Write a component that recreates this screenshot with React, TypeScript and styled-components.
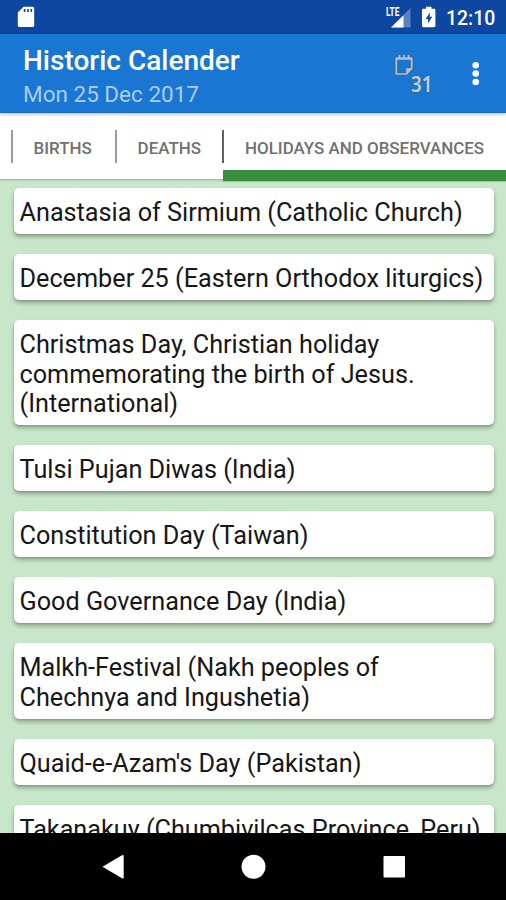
import React from 'react';
import styled, { createGlobalStyle } from 'styled-components';

const GlobalStyle = createGlobalStyle`
  * { box-sizing: border-box; }
  body { margin: 0; font-family: Roboto, "Noto Sans", sans-serif; }
`;

const Screen = styled.div`
  width: 506px;
  height: 900px;
  display: flex;
  flex-direction: column;
  overflow: hidden;
  background: #c8e6c9;
`;

const StatusBar = styled.header`
  flex: none;
  height: 34px;
  display: flex;
  align-items: center;
  padding: 0 11px 0 17px;
  background: #0d47a1;
  color: #fff;
`;

const StatusIcons = styled.div`
  margin-left: auto;
  display: flex;
  align-items: center;
`;

const Clock = styled.span`
  width: 49px;
  margin-left: 9px;
  font-size: 19.4px;
  font-weight: 500;
  line-height: 34px;
  white-space: nowrap;
  padding-top: 3px;
`;

const AppBar = styled.div`
  flex: none;
  height: 79px;
  display: flex;
  padding-left: 23px;
  background: #1976d2;
  border-bottom: 1px solid #126bc8;
  color: #fff;
  z-index: 3;
  box-shadow: 0 1px 4px rgba(0, 0, 0, 0.3);
`;

const Titles = styled.div`
  flex: 1;
  padding-top: 10px;
  white-space: nowrap;
`;

const Title = styled.h1`
  margin: 0;
  font-size: 28px;
  font-weight: 500;
  line-height: 33px;
`;

const Subtitle = styled.div`
  font-size: 22.5px;
  line-height: 35px;
  color: #a9cdf2;
`;

const Actions = styled.div`
  display: flex;
  width: 113px;
`;

const Tabs = styled.nav`
  flex: none;
  height: 66px;
  display: flex;
  padding-left: 11px;
  background: #fff;
  z-index: 2;
  box-shadow: 0 1px 2px rgba(0, 0, 0, 0.25);
`;

const Tab = styled.div<{ $width: number; $active?: boolean }>`
  position: relative;
  flex: none;
  width: ${p => p.$width}px;
  padding: 18px 0 0 ${p => (p.$active ? 22 : 22.6)}px;
  font-size: 16.95px;
  font-weight: 500;
  line-height: 35px;
  color: #707070;
  white-space: nowrap;

  &::before {
    content: '';
    position: absolute;
    left: ${p => (p.$active ? -1 : 0)}px;
    top: 17px;
    width: ${p => (p.$active ? 1.5 : 2)}px;
    height: 33px;
    background: ${p => (p.$active ? '#606060' : '#9b9b9b')};
  }

  &::after {
    content: '';
    display: ${p => (p.$active ? 'block' : 'none')};
    position: absolute;
    left: 0;
    right: 0;
    top: 57px;
    height: 11px;
    background: #388e3c;
    box-shadow: 0 1px 1px rgba(0, 0, 0, 0.15);
  }
`;

const List = styled.main`
  flex: 1;
  min-height: 0;
  overflow: hidden;
  display: flex;
  flex-direction: column;
  gap: 20.25px;
  padding: 9px 12px 0 13.5px;
`;

const Card = styled.article`
  flex: none;
  padding: 10px 6px 6.1px;
  border-radius: 5px;
  background: #fff;
  color: #171717;
  font-size: 25.22px;
  line-height: 29.65px;
  white-space: pre-line;
  box-shadow: 0 3px 4px rgba(0, 0, 0, 0.28), 0 1px 2px rgba(0, 0, 0, 0.12);
`;

const NavBar = styled.footer`
  flex: none;
  height: 67px;
  background: #000;
  z-index: 2;
`;

const events = [
  'Anastasia of Sirmium (Catholic Church)',
  'December 25 (Eastern Orthodox liturgics)',
  'Christmas Day, Christian holiday\ncommemorating the birth of Jesus.\n(International)',
  'Tulsi Pujan Diwas (India)',
  'Constitution Day (Taiwan)',
  'Good Governance Day (India)',
  'Malkh-Festival (Nakh peoples of\nChechnya and Ingushetia)',
  "Quaid-e-Azam's Day (Pakistan)",
  'Takanakuy (Chumbivilcas Province, Peru)',
];

const SdCardIcon = () => (
  <svg width="18" height="22" viewBox="0 0 18 22">
    <path d="M6.5.8H15.6a1.6 1.6 0 0 1 1.6 1.6v17a1.6 1.6 0 0 1-1.6 1.6H2.4A1.6 1.6 0 0 1 .8 19.4V6.5Z" fill="#fff" />
    <path d="M7.6 3v3M11 3v3M14.3 3v3" stroke="#0d47a1" strokeWidth="1.6" />
  </svg>
);

const SignalIcon = () => (
  <svg width="36" height="24" viewBox="0 0 36 24">
    <path d="M25.500 3v19.500H6Z" fill="#5b82c0" />
    <path d="M18.500 10.300V22.500H6Z" fill="#fff" />
    <text x="1" y="11" fontSize="12" fontWeight="700" fill="#fff" stroke="#0d47a1" strokeWidth=".8" paintOrder="stroke" textLength="13.500" lengthAdjust="spacingAndGlyphs">LTE</text>
  </svg>
);

const BatteryIcon = () => (
  <svg width="16" height="22" viewBox="0 0 16 22">
    <path d="M5 .8h5.500v2H13a1.400 1.400 0 0 1 1.400 1.400v15.600a1.400 1.400 0 0 1-1.400 1.400H2.400A1.400 1.400 0 0 1 1 19.800V4.200a1.400 1.400 0 0 1 1.400-1.400H5Z" fill="#fff" />
    <path d="M9 6.500 4.600 13h2.500v4.500l4.100-6.800H8.700Z" fill="#0d47a1" />
  </svg>
);

const ActionIcons = () => (
  <svg width="113" height="78" viewBox="0 0 113 78">
    <g fill="none" strokeLinejoin="round">
      <path d="M3.300 24H18.700V34.500L13.500 40H3.300Z" stroke="#45647f" strokeWidth="3.800" />
      <path d="M6.500 21v4M11 21v4M15.500 21v4" stroke="#45647f" strokeWidth="3" />
      <path d="M3.300 24H18.700V34.500L13.500 40H3.300Z" stroke="#a5c5e3" strokeWidth="1.700" />
      <path d="M3.300 25H18.700M6.500 21v4M11 21v4M15.500 21v4" stroke="#a5c5e3" strokeWidth="1.700" />
      <path d="M13.500 40V34.500H18.700Z" fill="#a5c5e3" stroke="#a5c5e3" strokeWidth=".6" />
    </g>
    <text x="18" y="57.500" fontFamily="Noto Sans" fontSize="21.500" fontWeight="600" fill="#b3d2f0" stroke="#45647f" strokeWidth="1.800" paintOrder="stroke" textLength="21.500" lengthAdjust="spacingAndGlyphs">31</text>
    <g fill="#fff">
      <circle cx="82.700" cy="31.300" r="3.300" />
      <circle cx="82.700" cy="39.500" r="3.300" />
      <circle cx="82.700" cy="48" r="3.300" />
    </g>
  </svg>
);

const NavigationIcons = () => (
  <svg width="506" height="67" viewBox="0 0 506 67" fill="#fff">
    <path d="M102.500 33.800 122 22.200Q123.700 21.500 123.700 23V44.500Q123.700 46 122 45.300Z" />
    <circle cx="253.500" cy="33.800" r="12" />
    <rect x="383.500" y="23" width="21.500" height="21.500" rx="1" />
  </svg>
);

export default function App() {
  return (
    <Screen>
      <GlobalStyle />
      <StatusBar>
        <SdCardIcon />
        <StatusIcons>
          <SignalIcon />
          <BatteryIcon />
          <Clock>12:10</Clock>
        </StatusIcons>
      </StatusBar>
      <AppBar>
        <Titles>
          <Title>Historic Calender</Title>
          <Subtitle>Mon 25 Dec 2017</Subtitle>
        </Titles>
        <Actions><ActionIcons /></Actions>
      </AppBar>
      <Tabs>
        <Tab $width={104}>BIRTHS</Tab>
        <Tab $width={108}>DEATHS</Tab>
        <Tab $width={283} $active>HOLIDAYS AND OBSERVANCES</Tab>
      </Tabs>
      <List>
        {events.map(event => <Card key={event}>{event}</Card>)}
      </List>
      <NavBar><NavigationIcons /></NavBar>
    </Screen>
  );
}
